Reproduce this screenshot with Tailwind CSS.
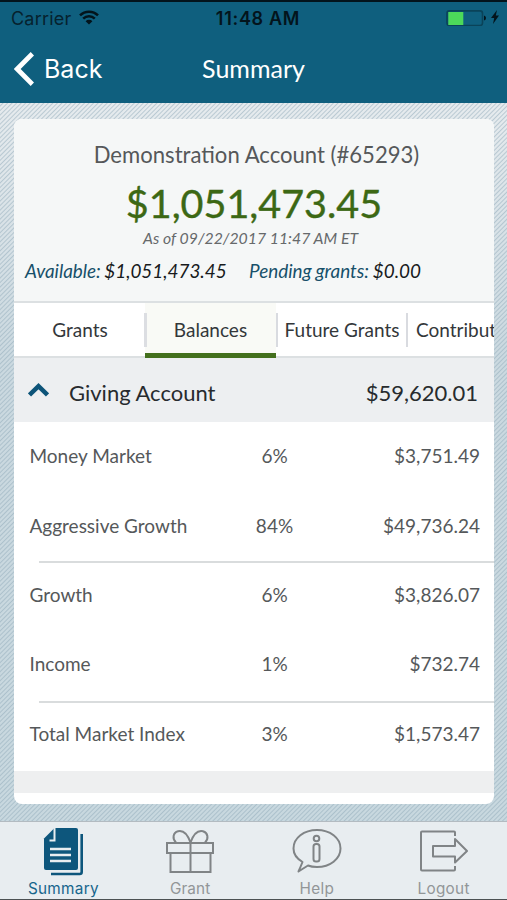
<!DOCTYPE html>
<html lang="en">
<head>
    <meta charset="UTF-8">
    <meta name="viewport" content="width=device-width, initial-scale=1.0">
    <title>Summary</title>
    <script src="https://cdn.jsdelivr.net/npm/@tailwindcss/browser@4"></script>
</head>
<body class="w-[507px] h-[900px] overflow-hidden flex flex-col font-['Lato',sans-serif] bg-[#c3d0d8]">
    <!-- Header -->
    <header class="h-[103px] shrink-0 bg-[#0f5f7e] border-t-2 border-[#03141c] text-white">
        <div class="h-8 grid grid-cols-3 items-center pl-[11px] pr-[8px] font-['Inter',sans-serif] text-[#06222e]">
            <div class="flex items-center gap-2">
                <span class="text-[18px] tracking-[0.2px]">Carrier</span>
                <svg class="w-5 h-[15px] -mt-0.5" viewBox="0 0 20 15" fill="none" stroke="#03141c" stroke-width="2.5">
                    <path d="M1 5.4a12.8 12.8 0 0 1 18 0"/>
                    <path d="M4.2 8.7a8.2 8.2 0 0 1 11.6 0"/>
                    <path d="M10 14.6l-3.4-3.4a4.8 4.8 0 0 1 6.8 0z" fill="#03141c" stroke="none"/>
                </svg>
            </div>
            <span class="pl-1.5 text-center text-[18px] tracking-[0.7px] font-semibold whitespace-nowrap text-[#03141c]">11:48 AM</span>
            <div class="flex items-center justify-end gap-[5px]">
                <svg class="w-[40px] h-4" viewBox="0 0 40 16">
                    <rect x="1" y="0.9" width="35.5" height="14.6" rx="2.5" fill="none" stroke="#0a4359" stroke-width="1.6"/>
                    <rect x="2.3" y="2" width="15" height="13" fill="#4cd95a"/>
                    <path d="M38 5.5q2 .5 2 2.5t-2 2.5z" fill="#03141c"/>
                </svg>
                <svg class="w-2 h-3.5 -mt-0.5" viewBox="0 0 8 14"><path d="M6 0L0 8h3.2L2 14l6-8.5H4.8z" fill="#03141c"/></svg>
            </div>
        </div>
        <div class="h-[69px] grid grid-cols-3 items-center pl-[14px] pr-[14px]">
            <div class="flex items-center gap-[10px]">
                <svg class="w-5 h-[34px]" viewBox="0 0 20 34" fill="none" stroke="#fff" stroke-width="4.8"><path d="M18.4 1.8L3.2 17l15.2 15.2"/></svg>
                <span class="font-['Inter',sans-serif] text-[25px] pt-0.5">Back</span>
            </div>
            <h1 class="text-center text-[25px]">Summary</h1>
        </div>
    </header>

    <!-- Card on a striped background -->
    <main class="grow px-[14px] pt-4 pr-[13px] bg-[repeating-linear-gradient(135deg,#8fa9b800_0px,#8fa9b800_1.2px,#8fa9b880_2.2px,#8fa9b800_3.2px),linear-gradient(#e6ebee_0px,#cbd9e0_250px,#c8d8df_100%)]">
        <div class="h-[685px] rounded-lg overflow-hidden bg-white flex flex-col">
            <section class="h-[182px] shrink-0 bg-[#f5f7f7] flex flex-col items-center pt-[21px]">
                <h2 class="ml-[5px] text-[22.1px] leading-[30px] text-[#55585a]">Demonstration Account (#65293)</h2>
                <p class="mt-[9px] text-[39.5px] leading-[48px] text-[#3c6814] [-webkit-text-stroke:0.4px_#3c6814]">$1,051,473.45</p>
                <p class="mt-px mr-[7px] text-[15.8px] leading-[20px] italic text-[#66696b]">As of 09/22/2017 11:47 AM ET</p>
                <div class="w-full mt-[11px] pl-[11px] flex text-[18.9px] leading-6 italic whitespace-nowrap text-[#181b1d]">
                    <p class="w-[224px] [word-spacing:-1px]"><span class="text-[#17506a]">Available:</span> $1,051,473.45</p>
                    <p class="[word-spacing:-0.7px]"><span class="text-[#17506a]">Pending grants:</span> $0.00</p>
                </div>
            </section>
            <nav class="h-[57px] shrink-0 flex border-y-2 border-[#dce0e2] text-[19px] text-[#33373a] whitespace-nowrap">
                <div class="w-[131px] shrink-0 flex items-center justify-center pl-px pt-px">Grants</div>
                <div class="w-[131px] shrink-0 h-[55px] relative flex items-center justify-center pb-px bg-[#f9faf6] border-b-5 border-[#44701d]">
                    <span class="pt-[5px]">Balances</span>
                    <i class="absolute -left-px top-[10px] w-[3px] h-[34px] bg-[#dcdee2]"></i>
                </div>
                <div class="w-[132px] shrink-0 relative flex items-center justify-center pt-px">Future Grants
                    <i class="absolute left-0 top-[10px] w-[2px] h-[34px] bg-[#d9dbe0]"></i>
                    <i class="absolute right-0 top-[10px] w-[2px] h-[34px] bg-[#d9dbe0]"></i>
                </div>
                <div class="pl-2 pt-px shrink-0 flex items-center">Contributions</div>
            </nav>
            <div class="h-16 shrink-0 flex items-center pl-[14px] pr-[16px] pt-1 bg-[#edeff1] text-[22px] text-[#272b2e]">
                <svg class="w-[21px] h-[14px] -mt-1" viewBox="0 0 21 14" fill="none" stroke="#0d5479" stroke-width="4.5"><path d="M1.5 12L10.5 3.2 19.5 12"/></svg>
                <span class="ml-5 grow">Giving Account</span>
                <span>$59,620.01</span>
            </div>
            <div class="h-[349px] shrink-0 text-[19px] text-[#55585a]">
                <div class="h-[69px] grid grid-cols-[184px_122px_1fr] items-center pl-[15.5px] pr-[14px]">
                    <span>Money Market</span><span class="text-center">6%</span><span class="text-right">$3,751.49</span>
                </div>
                <div class="h-[70px] grid grid-cols-[184px_122px_1fr] items-center pl-[15.5px] pr-[14px]">
                    <span>Aggressive Growth</span><span class="text-center">84%</span><span class="text-right">$49,736.24</span>
                </div>
                <div class="h-0.5 ml-[25px] bg-[#d9dcdd]"></div>
                <div class="h-[65px] grid grid-cols-[184px_122px_1fr] items-center pl-[15.5px] pr-[14px]">
                    <span>Growth</span><span class="text-center">6%</span><span class="text-right">$3,826.07</span>
                </div>
                <div class="h-[73px] grid grid-cols-[184px_122px_1fr] items-center pl-[15.5px] pr-[14px]">
                    <span>Income</span><span class="text-center">1%</span><span class="text-right">$732.74</span>
                </div>
                <div class="h-0.5 ml-[25px] bg-[#d9dcdd]"></div>
                <div class="h-[63px] grid grid-cols-[184px_122px_1fr] items-center pl-[15.5px] pr-[14px]">
                    <span>Total Market Index</span><span class="text-center">3%</span><span class="text-right">$1,573.47</span>
                </div>
            </div>
            <div class="h-[22px] shrink-0 bg-[#eeeff0]"></div>
        </div>
    </main>

    <!-- Tab bar -->
    <footer class="h-[79px] shrink-0 grid grid-cols-4 border-t border-b border-t-[#b3bbc1] border-b-[#4c5153] bg-[#e8edf0] font-['Inter',sans-serif] text-[15.3px] tracking-[0.1px] leading-5 text-[#929698]">
        <div class="flex flex-col items-center pt-[5px] text-[#17658c]">
            <svg class="w-[42px] h-[50px] ml-0.5" viewBox="0 0 42 50">
                <path d="M11.5 1H33q2 0 2 2v38q0 2-2 2H3q-2 0-2-2V11.5z" fill="#0d567c"/>
                <path d="M11.5 0v13.5H6.5" fill="none" stroke="#e8edf0" stroke-width="2"/>
                <path d="M7 22h21M7 28h21M7 34h21" stroke="#e8edf0" stroke-width="2.4"/>
                <path d="M38.7 7v38q0 2-2 2H8" fill="none" stroke="#0d567c" stroke-width="2.6"/>
            </svg>
            <span class="mt-0.5 tracking-[0.3px]">Summary</span>
        </div>
        <div class="flex flex-col items-center pt-[5px]">
            <svg class="w-[48px] h-[50px]" viewBox="0 0 48 50" fill="none" stroke="#808486" stroke-width="2">
                <path d="M1 16h46v10H1zM4.5 26v19h40V26M24.5 16v29"/>
                <path d="M24.5 15.5C21.5 7 17 3 12 4.2C7 5.500 6 12 10 15.500M24.500 15.500C27.500 7 32 3 37 4.200C42 5.500 43 12 39 15.500"/>
            </svg>
            <span class="mt-0.5">Grant</span>
        </div>
        <div class="flex flex-col items-center pt-[5px]">
            <svg class="w-[50px] h-[50px]" viewBox="0 0 50 50" fill="none" stroke="#808486" stroke-width="2" stroke-linejoin="round">
                <path d="M10.5 35C4.5 31.5 1.5 27 1.5 21.5C1.5 11 12 3 25 3s23.5 8 23.5 18.5S38 40 25 40q-5.5 0-9-1.5Q12 41 6.5 44.5Q8.5 40 10.5 35z"/>
                <circle cx="24.5" cy="11.5" r="2.8"/>
                <rect x="21.5" y="17" width="6" height="17.5" rx="2.5"/>
            </svg>
            <span class="mt-0.5 tracking-[0.3px]">Help</span>
        </div>
        <div class="flex flex-col items-center pt-[5px]">
            <svg class="w-[48px] h-[50px]" viewBox="0 0 48 50" fill="none" stroke="#808486" stroke-width="2" stroke-linejoin="round">
                <path d="M35 9V5.5q0-1-1-1H2q-1 0-1 1v37q0 1 1 1h32q1 0 1-1V39"/>
                <path d="M13 19h22v-7L47 24 35 35.5V29.5H13z"/>
            </svg>
            <span class="mt-0.5 tracking-[0.3px]">Logout</span>
        </div>
    </footer>
</body>
</html>
